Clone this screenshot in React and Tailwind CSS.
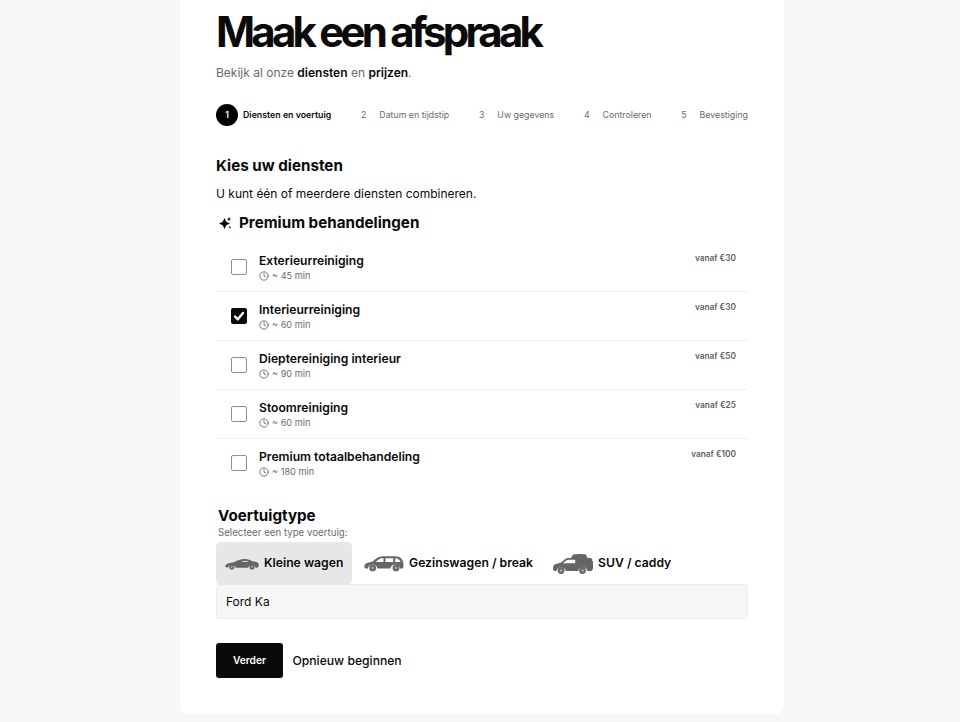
import React from 'react';

const steps = [
  { n: '2', label: 'Datum en tijdstip' },
  { n: '3', label: 'Uw gegevens' },
  { n: '4', label: 'Controleren' },
  { n: '5', label: 'Bevestiging' },
];

const services = [
  { name: 'Exterieurreiniging', time: '~ 45 min', price: 'vanaf €30' },
  { name: 'Interieurreiniging', time: '~ 60 min', price: 'vanaf €30', checked: true },
  { name: 'Dieptereiniging interieur', time: '~ 90 min', price: 'vanaf €50' },
  { name: 'Stoomreiniging', time: '~ 60 min', price: 'vanaf €25' },
  { name: 'Premium totaalbehandeling', time: '~ 180 min', price: 'vanaf €100' },
];

function Clock() {
  return (
    <svg width="10" height="10" viewBox="0 0 24 24" fill="none" stroke="#6b6b6b" strokeWidth="2.2" strokeLinecap="round" strokeLinejoin="round">
      <circle cx="12" cy="12" r="10" />
      <path d="M12 6v6l4 2" />
    </svg>
  );
}

function Sparkle() {
  return (
    <svg width="14" height="14" viewBox="0 0 14 14" fill="#0a0a0a">
      <path d="M6.500 2 8.300 5.700 12 7.500 8.300 9.300 6.500 13 4.700 9.300 1 7.500 4.700 5.700Z" />
      <path d="M11 1l.7 1.400 1.400.7-1.400.7-.7 1.400-.7-1.400-1.400-.7 1.400-.7Z" />
      <path d="M11.800 9.800l.5 1 1 .4-1 .4-.5 1-.4-1-1-.4 1-.4Z" />
    </svg>
  );
}

function SportsCar() {
  return (
    <svg width="34" height="12" viewBox="0 0 34 12" fill="#666666">
      <path fillRule="evenodd" d="M0.500 7.500C1 5.500 5 4.800 9 4.300 12 2.500 15.500 1 20 1c3 0 5.500 1 7.500 2.300 2.500.3 5.500 1 6 2.200.4 1 .3 3-.5 3.700-.4.4-1.400.5-2.300.5a4 4 0 0 0-7.600 0H10.600a4 4 0 0 0-7.600 0c-1 0-2-.2-2.400-.6-.4-.4-.7-1-.6-1.600ZM16 4h7.500C22 2.800 19 2.400 16 4Z" />
      <circle cx="6.800" cy="9" r="2.600" />
      <circle cx="27" cy="9" r="2.600" />
      <circle cx="6.800" cy="9" r="1" fill="#a8a8a8" />
      <circle cx="27" cy="9" r="1" fill="#a8a8a8" />
    </svg>
  );
}

function StationCar() {
  return (
    <svg width="40" height="17" viewBox="0 0 41 17" fill="#666666">
      <path fillRule="evenodd" d="M0.500 10.500c.3-2 4-3 8-3.700C11.500 4 15 1 19 1h13c3 0 5.500 1 7 3.500.9 1.500 1.500 3.500 1.500 6 0 1.500-.3 3-1.300 3h-2.300a5 5 0 0 0-9.800 0H13.800a5 5 0 0 0-9.800 0H1.500C.6 13.500.3 12 .5 10.500ZM12 7h8V3h-1.500C16 3 14 4.800 12 7Zm10 0h8V3h-8Zm10 0h5.500C36.500 4.500 35 3 32 3Z" />
      <circle cx="8.900" cy="13" r="3.500" />
      <circle cx="32.800" cy="13" r="3.500" />
      <circle cx="8.900" cy="13" r="1.300" fill="#a8a8a8" />
      <circle cx="32.800" cy="13" r="1.300" fill="#a8a8a8" />
    </svg>
  );
}

function Suv() {
  return (
    <svg width="40" height="21" viewBox="0 0 40 21" fill="#666666">
      <path d="M20 1.500C24 .8 30 .8 33 1.500l1.500 3.500H18Z" />
      <path fillRule="evenodd" d="M14 5h22c2 0 3 .5 3.300 1.500l-.3 1.500h1v6c0 2-.5 4-2 4h-3.500a4.800 4.800 0 0 0-9.400 0H12.800a4.800 4.800 0 0 0-9.400 0H1.500C.5 18 0 16.500 0 15c0-2.500 1-3.600 3-4.100 2-.5 4-.9 5-1.400 2-1.600 4-3.500 6-4.500Zm1 1.800c-1.500.6-3.500 2-5 3.400h12.200V6.800Z" />
      <circle cx="8.100" cy="17.500" r="3.400" />
      <circle cx="29.500" cy="17.500" r="3.400" />
      <circle cx="8.100" cy="17.500" r="1.300" fill="#a8a8a8" />
      <circle cx="29.500" cy="17.500" r="1.300" fill="#a8a8a8" />
    </svg>
  );
}

function ServiceRow({ service, last }) {
  return (
    <div className={`flex h-[49px] items-start pl-[15px] pr-[12px] pt-[10px] ${last ? '' : 'border-b border-[#f0f0ee]'}`}>
      <div className="mt-[6px] w-[28px] shrink-0">
        {service.checked ? (
          <div className="flex h-[16px] w-[16px] items-center justify-center rounded-[2px] bg-[#0a0a0a]">
            <svg width="12" height="12" viewBox="0 0 12 12" fill="none" stroke="#fff" strokeWidth="2.4" strokeLinecap="round" strokeLinejoin="round">
              <path d="M2 6.500 4.800 9.300 10 3" />
            </svg>
          </div>
        ) : (
          <div className="h-[16px] w-[16px] rounded-[2px] border border-[#8f8f8f] bg-white" />
        )}
      </div>
      <div className="flex-1">
        <div className="text-[12.15px] font-semibold leading-[16px] text-[#0a0a0a]">{service.name}</div>
        <div className="flex items-center gap-[3px] text-[9.2px] leading-[14px] text-[#6b6b6b]">
          <Clock />
          <span>{service.time}</span>
        </div>
      </div>
      <div className="mt-[-1px] text-[8.3px] font-semibold leading-[12px] text-[#5f5f5f]">{service.price}</div>
    </div>
  );
}

export default function App() {
  return (
    <div className="h-[722px] overflow-hidden bg-[#f7f7f5] font-['Inter',sans-serif]">
      <div className="ml-[180px] w-[604px] rounded-b-lg bg-white px-[36px] pb-[36px] pt-[5px]">
        {/* titel */}
        <h1 className="text-[42px] font-bold leading-[53px] tracking-[-0.09em] text-[#0a0a0a]">Maak een afspraak</h1>
        <p className="mt-[7px] text-[12px] leading-[16px] text-[#6b6b6b]">
          Bekijk al onze <b className="font-semibold text-[#0a0a0a]">diensten</b> en <b className="font-semibold text-[#0a0a0a]">prijzen</b>.
        </p>

        {/* stappen */}
        <div className="mt-[23px] flex h-[22px] items-center justify-between text-[8.8px]">
          <div className="flex items-center gap-[5px]">
            <span className="flex h-[22px] w-[22px] items-center justify-center rounded-full bg-black font-semibold text-white">1</span>
            <span className="font-semibold text-[#0a0a0a]">Diensten en voertuig</span>
          </div>
          {steps.map((s) => (
            <div key={s.n} className="flex items-center gap-[13px] text-[#6b6b6b]">
              <span>{s.n}</span>
              <span>{s.label}</span>
            </div>
          ))}
        </div>

        <h2 className="mt-[30px] text-[15.2px] font-bold leading-[20px] text-[#0a0a0a]">Kies uw diensten</h2>
        <p className="mt-[9px] text-[12px] leading-[18px] text-[#0a0a0a]">U kunt één of meerdere diensten combineren.</p>

        <div className="ml-[2px] mt-[10px] flex items-center gap-[7px]">
          <Sparkle />
          <h3 className="text-[15.2px] font-bold leading-[20px] text-[#0a0a0a]">Premium behandelingen</h3>
        </div>

        <div className="mt-[10px]">
          {services.map((s, i) => (
            <ServiceRow key={s.name} service={s} last={i === services.length - 1} />
          ))}
        </div>

        <h2 className="ml-[2px] mt-[18px] text-[15.2px] font-bold leading-[20px] text-[#0a0a0a]">Voertuigtype</h2>
        <p className="ml-[2px] text-[9.7px] leading-[14px] text-[#6b6b6b]">Selecteer een type voertuig:</p>

        <div className="mt-[2px] flex h-[43px] items-center">
          <div className="flex h-[43px] w-[136px] items-center gap-[5px] rounded-[5px] bg-[#e7e7e7] pl-[9px]">
            <SportsCar />
            <span className="text-[12.2px] font-semibold text-[#0a0a0a]">Kleine wagen</span>
          </div>
          <div className="ml-[12px] flex items-center gap-[5px]">
            <StationCar />
            <span className="text-[12.2px] font-semibold text-[#0a0a0a]">Gezinswagen / break</span>
          </div>
          <div className="ml-[20px] flex items-center gap-[5px]">
            <Suv />
            <span className="text-[12.2px] font-semibold text-[#0a0a0a]">SUV / caddy</span>
          </div>
        </div>

        <div className="mt-[-1px] flex h-[35px] items-center rounded-[3px] border border-[#eeeeec] bg-[#f6f6f4] pl-[9px] text-[12px] text-[#0a0a0a]">
          Ford Ka
        </div>

        <div className="mt-[24px] flex items-center gap-[9.5px]">
          <button className="h-[35px] w-[67px] rounded-[3px] bg-[#0a0a0a] text-[10.2px] font-semibold text-white">Verder</button>
          <button className="pt-[1px] text-[12.15px] font-medium text-[#0a0a0a]">Opnieuw beginnen</button>
        </div>
      </div>
    </div>
  );
}
